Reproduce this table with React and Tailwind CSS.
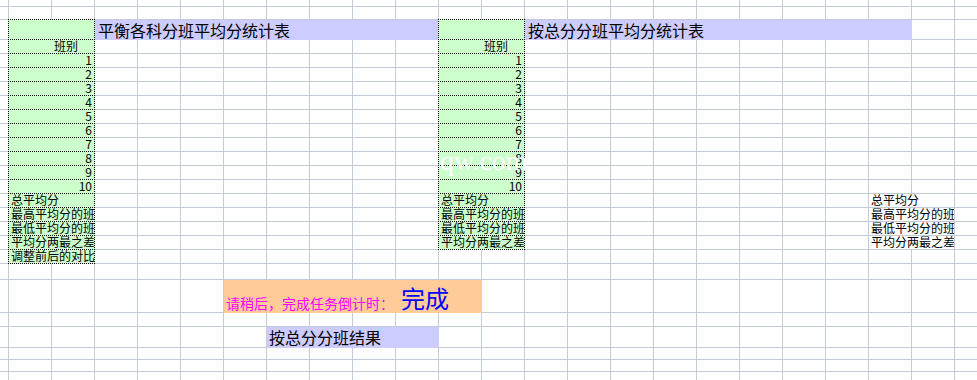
import React from "react";

// grid rows for the green blocks (title row through the label rows)
const ROW_START = [
  "row-start-3", "row-start-4", "row-start-5", "row-start-6", "row-start-7",
  "row-start-8", "row-start-9", "row-start-10", "row-start-11", "row-start-12",
  "row-start-13", "row-start-14", "row-start-15", "row-start-16", "row-start-17",
  "row-start-18", "row-start-19",
];

const NUM = "justify-end pr-[2px]";
const LABEL = "justify-start pl-[2px]";

const leftCells = [
  { t: "", a: "" },
  { t: "班别", a: "justify-end pr-[16px]" },
  ...["1", "2", "3", "4", "5", "6", "7", "8", "9", "10"].map((t) => ({ t, a: NUM })),
  { t: "总平均分", a: LABEL },
  { t: "最高平均分的班级", a: LABEL },
  { t: "最低平均分的班级", a: LABEL },
  { t: "平均分两最之差", a: LABEL },
  { t: "调整前后的对比情况", a: LABEL },
];

const rightLabels = ["总平均分", "最高平均分的班级", "最低平均分的班级", "平均分两最之差"];

const LINE = "border-[#c5cad9]";
// 24 columns x 26 rows, minus the cells taken by the blocks below
const PLAIN_COUNT = 24 * 26 - 101;

const GreenCell = ({ text, align, pos }) => (
  <div
    className={`col-span-2 ${pos} -ml-px -mt-px flex items-end overflow-hidden whitespace-nowrap border border-dotted border-black bg-[#ccffcc] pb-px text-[12px] leading-[12px] ${align}`}
  >
    {text}
  </div>
);

const App = () => {
  return (
    <div className="relative h-[380px] w-[977px] overflow-hidden bg-white font-['Noto_Sans_CJK_SC',sans-serif] text-black">
      <div className="grid w-max grid-cols-[9px_repeat(23,43px)] grid-rows-[7px_13px_20px_repeat(16,14px)_16px_33px_14px_21px_12px_12px_14px]">
        {/* empty sheet cells */}
        {Array.from({ length: PLAIN_COUNT }).map((_, i) => (
          <div key={i} className={`border-r border-b ${LINE} bg-white`} />
        ))}

        {/* left block */}
        {leftCells.map((c, i) => (
          <GreenCell key={"l" + i} text={c.t} align={`col-start-2 ${c.a}`} pos={ROW_START[i]} />
        ))}
        <div className="col-start-4 col-span-8 row-start-3 flex items-end border-r border-b border-[#ccccff] bg-[#ccccff] pb-px pl-[3px] text-[16px] leading-[16px]">
          平衡各科分班平均分统计表
        </div>

        {/* right block */}
        {leftCells.slice(0, 16).map((c, i) => (
          <GreenCell key={"r" + i} text={c.t} align={`col-start-12 ${c.a}`} pos={ROW_START[i]} />
        ))}
        <div className="col-start-14 col-span-9 row-start-3 flex items-end border-r border-b border-[#ccccff] bg-[#ccccff] pb-px pl-[3px] text-[16px] leading-[16px]">
          按总分分班平均分统计表
        </div>

        {/* labels on the far right */}
        <div className={`col-start-22 col-span-2 row-start-15 flex items-end overflow-hidden whitespace-nowrap border-r border-b ${LINE} pb-px pl-[2px] text-[12px] leading-[12px]`}>
          {rightLabels[0]}
        </div>
        <div className={`col-start-22 col-span-2 row-start-16 flex items-end overflow-hidden whitespace-nowrap border-r border-b ${LINE} pb-px pl-[2px] text-[12px] leading-[12px]`}>
          {rightLabels[1]}
        </div>
        <div className={`col-start-22 col-span-2 row-start-17 flex items-end overflow-hidden whitespace-nowrap border-r border-b ${LINE} pb-px pl-[2px] text-[12px] leading-[12px]`}>
          {rightLabels[2]}
        </div>
        <div className={`col-start-22 col-span-2 row-start-18 flex items-end overflow-hidden whitespace-nowrap border-r border-b ${LINE} pb-px pl-[2px] text-[12px] leading-[12px]`}>
          {rightLabels[3]}
        </div>

        {/* countdown */}
        <div className="col-start-7 col-span-6 row-start-21 flex items-end whitespace-nowrap border-r border-b border-[#ffcc99] bg-[#ffcc99] pb-[2px] pl-[2px]">
          <span className="text-[14px] leading-[14px] text-[#ff00ff]">请稍后，完成任务倒计时：</span>
          <span className="ml-[7px] text-[24px] leading-[24px] text-[#0000ff]">完成</span>
        </div>

        <div className="col-start-8 col-span-4 row-start-23 flex items-end border-r border-b border-[#ccccff] bg-[#ccccff] pb-[2px] pl-[2px] text-[16px] leading-[16px]">
          按总分分班结果
        </div>
      </div>

      {/* watermark */}
      <div className="pointer-events-none absolute left-[440px] top-[147px] font-['Liberation_Serif',serif] text-[28px] leading-none text-white">
        qw.com
      </div>
    </div>
  );
};

export default App;
